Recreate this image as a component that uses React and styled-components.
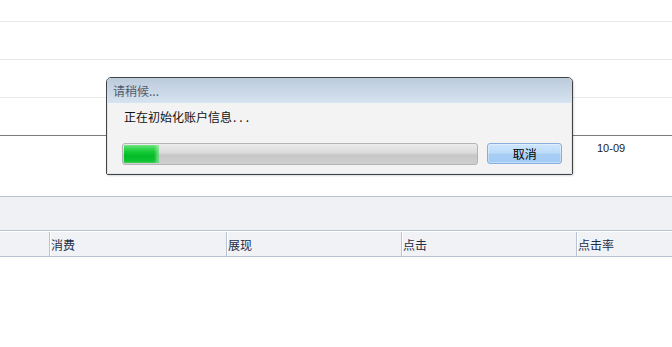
import React from "react";
import styled, { createGlobalStyle } from "styled-components";

const GlobalStyle = createGlobalStyle`
  html, body {
    margin: 0;
    padding: 0;
    background: #ffffff;
  }
  body {
    font-family: "Liberation Sans", "Noto Sans CJK SC", sans-serif;
    font-size: 12px;
  }
`;

const Page = styled.div`
  position: relative;
  width: 672px;
  height: 347px;
  overflow: hidden;
  background: #ffffff;
`;

const ListRow = styled.div`
  box-sizing: border-box;
  height: ${({ $h }) => $h}px;
  border-bottom: 1px solid ${({ $dark }) => ($dark ? "#7c7c7c" : "#e8e8e8")};
`;

const DataRow = styled.div`
  box-sizing: border-box;
  height: 60px;
  padding: 5px 0 0 597px;
  line-height: 14px;
  color: #1a1a1a;
  font-size: 11px;
`;

const Toolbar = styled.div`
  box-sizing: border-box;
  height: 35px;
  background: #eff1f4;
  border-top: 1px solid #bac3d3;
  border-bottom: 1px solid #bac3d3;
`;

const HeaderRow = styled.div`
  box-sizing: border-box;
  height: 26px;
  display: flex;
  background: #f0f2f6;
  border-top: 1px solid #ffffff;
  border-bottom: 1px solid #bac3d3;
`;

const HeaderCell = styled.div`
  box-sizing: border-box;
  width: ${({ $w }) => ($w ? `${$w}px` : "auto")};
  flex: ${({ $w }) => ($w ? "none" : "1")};
  border-left: ${({ $first }) => ($first ? "none" : "1px solid #bac3d3")};
  box-shadow: ${({ $first }) => ($first ? "none" : "inset 1px 0 0 #ffffff")};
  padding-left: 1px;
  display: flex;
  align-items: center;
  color: #1f2d47;
  font-family: "Noto Sans CJK SC", sans-serif;
  font-size: 12px;
`;

const Dialog = styled.div`
  position: absolute;
  left: 106px;
  top: 77px;
  width: 467px;
  height: 98px;
  box-sizing: border-box;
  border: 1px solid #444444;
  border-radius: 5px 5px 2px 2px;
  background: #f3f3f3;
  overflow: hidden;
  display: flex;
  flex-direction: column;
  box-shadow: 1px 1px 2px rgba(0, 0, 0, 0.15);
`;

const TitleBar = styled.div`
  height: 25px;
  box-sizing: border-box;
  padding-left: 6px;
  display: flex;
  align-items: center;
  background: linear-gradient(#bccbdb, #d6e3f0);
  color: #4d5b6e;
  font-family: "Noto Sans CJK SC", sans-serif;
  font-size: 12px;
`;

const Body = styled.div`
  flex: 1;
  box-sizing: border-box;
  padding: 6px 9px 0 14px;
  border: 1px solid #dce6f1;
  border-top: none;
  display: flex;
  flex-direction: column;
`;

const Message = styled.div`
  margin-left: 2px;
  line-height: 16px;
  color: #111111;
  font-family: "Noto Sans CJK SC", sans-serif;
  font-size: 12px;
`;

const Dots = styled.span`
  letter-spacing: 3px;
  margin-left: 1px;
`;

const ActionRow = styled.div`
  margin-top: 18px;
  display: flex;
  align-items: flex-start;
  gap: 9px;
`;

const Track = styled.div`
  box-sizing: border-box;
  width: 358px;
  height: 22px;
  padding: 1px;
  border: 1px solid #b4b4b4;
  border-radius: 3px;
  background: linear-gradient(#ececec, #dadada 45%, #c7c7c7 55%, #cfcfcf);
  display: flex;
`;

const Fill = styled.div`
  height: 100%;
  border-radius: 1px;
  background: linear-gradient(#5ee36f, #12c934 40%, #06bb2a 60%, #0fc532);
  box-shadow: inset -3px 0 3px rgba(220, 240, 220, 0.5);
`;

const Button = styled.button`
  box-sizing: border-box;
  width: 75px;
  height: 21px;
  padding: 0;
  border: 1px solid #86afdd;
  border-radius: 3px;
  background: linear-gradient(#cde6fc, #bddcfa 45%, #a7cdf5 55%, #a3cbf4);
  box-shadow: inset 0 0 0 1px rgba(255, 255, 255, 0.35);
  color: #000000;
  font-family: "Noto Sans CJK SC", sans-serif;
  font-size: 12px;
  line-height: 18px;
`;

const columns = [
  { label: "", w: 49, first: true },
  { label: "消费", w: 177 },
  { label: "展现", w: 175 },
  { label: "点击", w: 175 },
  { label: "点击率" },
];

export default function App() {
  const progress = 0.1;
  return (
    <>
      <GlobalStyle />
      <Page>
        <ListRow $h={22} />
        <ListRow $h={38} />
        <ListRow $h={38} />
        <ListRow $h={38} $dark />
        <DataRow>10-09</DataRow>
        <Toolbar />
        <HeaderRow>
          {columns.map((c, i) => (
            <HeaderCell key={i} $w={c.w} $first={c.first}>
              {c.label}
            </HeaderCell>
          ))}
        </HeaderRow>

        <Dialog>
          <TitleBar>请稍候...</TitleBar>
          <Body>
            <Message>
              正在初始化账户信息<Dots>...</Dots>
            </Message>
            <ActionRow>
              <Track>
                <Fill style={{ width: `${progress * 100}%` }} />
              </Track>
              <Button>取消</Button>
            </ActionRow>
          </Body>
        </Dialog>
      </Page>
    </>
  );
}
